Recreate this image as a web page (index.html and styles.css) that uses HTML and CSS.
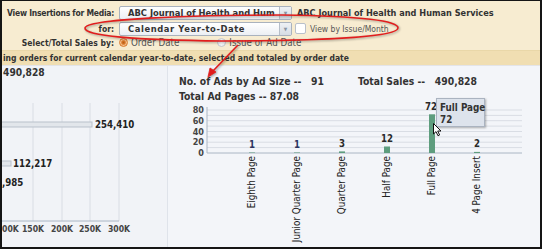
FILE: index.html
```html
<!DOCTYPE html>
<html lang="en">
<head>
  <meta charset="UTF-8" />
  <title>Insertions by Media</title>
  <link rel="stylesheet" href="styles.css">
</head>
<body>
  <div class="frame">
    <header class="filters">
      <div class="filter-row row-media">
        <span class="filter-label">View Insertions for Media:</span>
        <div class="select">
          <span class="select-text">ABC Journal of Health and Hum</span>
          <span class="select-btn">&#9660;</span>
        </div>
        <b class="media-name">ABC Journal of Health and Human Services</b>
      </div>
      <div class="filter-row row-period">
        <span class="filter-label">for:</span>
        <div class="select">
          <span class="select-text">Calendar Year-to-Date</span>
          <span class="select-btn">&#9660;</span>
        </div>
        <span class="checkbox"></span>
        <span class="option-text">View by Issue/Month</span>
      </div>
      <div class="filter-row row-total">
        <span class="filter-label">Select/Total Sales by:</span>
        <span class="radio radio-on"></span>
        <span class="option-text">Order Date</span>
        <span class="radio radio-off"></span>
        <span class="option-text">Issue or Ad Date</span>
      </div>
    </header>

    <div class="notice">ing orders for current calendar year-to-date, selected and totaled by order date</div>

    <main class="panels">
      <section class="left-panel">
        <div class="panel-total">490,828</div>
        <svg class="sales-chart" width="164" height="166" viewBox="2 80 164 166">
          <g class="grid-v">
            <line x1="33" y1="103" x2="33" y2="221" />
            <line x1="62" y1="103" x2="62" y2="221" />
            <line x1="90" y1="103" x2="90" y2="221" />
            <line x1="119" y1="103" x2="119" y2="221" />
          </g>
          <line class="axis" x1="0" y1="221" x2="119" y2="221" />
          <rect class="hbar" x="-2" y="122" width="94" height="5" />
          <rect class="hbar" x="-2" y="161" width="13" height="5" />
          <text class="bar-val" x="95" y="128">254,410</text>
          <text class="bar-val" x="13" y="167">112,217</text>
          <text class="bar-val" x="2" y="186">,985</text>
          <g class="axis-labels">
            <text class="axis-first" x="2" y="232">00K</text>
            <text x="33" y="232">150K</text>
            <text x="62" y="232">200K</text>
            <text x="90" y="232">250K</text>
            <text x="119" y="232">300K</text>
          </g>
        </svg>
      </section>

      <section class="right-panel">
        <div class="stats">
          <div class="stat-line">
            <span class="stat">No. of Ads by Ad Size --&nbsp;&nbsp; 91</span>
            <span class="stat stat-sales">Total Sales --&nbsp;&nbsp; 490,828</span>
          </div>
          <div class="stat-line">
            <span class="stat">Total Ad Pages -- 87.08</span>
          </div>
        </div>
        <svg class="size-chart" width="372" height="143" viewBox="166 103 372 143">
          <g class="grid-h">
            <line x1="205" y1="111" x2="520" y2="111" />
            <line x1="205" y1="116.4" x2="520" y2="116.4" />
            <line x1="205" y1="121.7" x2="520" y2="121.7" />
            <line x1="205" y1="127.1" x2="520" y2="127.1" />
            <line x1="205" y1="132.5" x2="520" y2="132.5" />
            <line x1="205" y1="137.9" x2="520" y2="137.9" />
            <line x1="205" y1="143.2" x2="520" y2="143.2" />
            <line x1="205" y1="148.6" x2="520" y2="148.6" />
          </g>
          <line class="axis" x1="205" y1="108" x2="205" y2="154" />
          <line class="axis" x1="205" y1="154" x2="520" y2="154" />
          <g class="y-labels">
            <text x="202" y="114">80</text>
            <text x="202" y="125">60</text>
            <text x="202" y="136">40</text>
            <text x="202" y="146">20</text>
            <text x="202" y="157">0</text>
          </g>
          <g class="vbars">
            <rect x="247" y="153.5" width="6" height="0.5" />
            <rect x="292" y="153.5" width="6" height="0.5" />
            <rect x="337" y="152.4" width="6" height="1.6" />
            <rect x="382" y="147.5" width="6" height="6.5" />
            <rect x="427" y="115.3" width="6" height="38.7" />
            <rect x="472" y="152.9" width="6" height="1.1" />
          </g>
          <g class="v-vals">
            <text class="v-val-low" x="250" y="149">1</text>
            <text class="v-val-low" x="295" y="149">1</text>
            <text x="340" y="148">3</text>
            <text x="385" y="143">12</text>
            <text x="429" y="111">72</text>
            <text x="475" y="148">2</text>
          </g>
          <g class="x-labels">
            <text transform="translate(253 157) rotate(-90)">Eighth Page</text>
            <text transform="translate(298 157) rotate(-90)">Junior Quarter Page</text>
            <text transform="translate(343 157) rotate(-90)">Quarter Page</text>
            <text transform="translate(388 157) rotate(-90)">Half Page</text>
            <text transform="translate(433 157) rotate(-90)">Full Page</text>
            <text transform="translate(478 157) rotate(-90)">4 Page Insert</text>
          </g>
        </svg>
        <div class="tooltip">
          <div>Full Page</div>
          <div>72</div>
        </div>
        <svg class="cursor" width="9" height="14" viewBox="0 0 9 14">
          <path d="M0.5 0.5 L0.5 11 L3 8.6 L5 12.8 L6.6 12 L4.7 8 L8 8 Z" />
        </svg>
      </section>
    </main>

    <!-- review markup drawn over the screen -->
    <svg class="annotation" width="542" height="249" viewBox="0 0 542 249">
      <path d="M85 28 C86 19 190 15 282 15 C362 16 399 21 398 28 C397 37 320 41 222 41 C135 40 84 36 85 28 Z" />
      <path d="M238 45 L212 72" />
      <path class="arrow-head" d="M208 77 L210 68 L216 72 Z" />
    </svg>
  </div>
</body>
</html>
```

FILE: styles.css
```css
* {
    margin: 0;
    padding: 0;
    box-sizing: border-box;
}
body {
    font-family: Tahoma, "DejaVu Sans Condensed", "DejaVu Sans", sans-serif;
    font-stretch: condensed;
    font-size: 8.5px;
    color: #333;
    background: #fff;
}
.frame {
    position: relative;
    width: 542px;
    height: 249px;
    border: 2px solid #151515;
    border-top-width: 1px;
    background: #f2f4f8;
    overflow: hidden;
    display: flex;
    flex-direction: column;
}

/* filter header */
.filters {
    background: #f7ecd1;
    padding-top: 4px;
    height: 49px;
}
.filter-row {
    display: flex;
    align-items: center;
    height: 15px;
}
.row-media {
    height: 16px;
}
.row-total {
    height: 13px;
}
.filter-label {
    display: flex;
    justify-content: flex-end;
    flex: none;
    width: 112px;
    white-space: nowrap;
    font-weight: bold;
    margin-right: 5px;
}
.row-media .filter-label {
    letter-spacing: -0.25px;
}
.select {
    display: flex;
    width: 173px;
    height: 14px;
    border: 1px solid #a9b2be;
    border-radius: 2px;
    background: linear-gradient(#ffffff, #eceff4);
}
.select-text {
    flex: 1;
    padding-left: 8px;
    line-height: 12px;
    font-size: 9.3px;
    font-weight: bold;
    color: #333;
    white-space: nowrap;
    overflow: hidden;
}
.row-period .select-text {
    letter-spacing: 0.6px;
}
.select-btn {
    width: 12px;
    border-left: 1px solid #b6bec9;
    background: linear-gradient(#eef1f5, #d6dce4);
    color: #8a94a3;
    font-size: 5px;
    line-height: 12px;
    text-align: center;
}
.media-name {
    margin-left: 5px;
    font-size: 9.1px;
    white-space: nowrap;
}
.checkbox {
    width: 11px;
    height: 11px;
    margin-left: 3px;
    border: 1px solid #b9c0ca;
    border-radius: 2px;
    background: #fff;
}
.option-text {
    margin-left: 4px;
    color: #555;
    white-space: nowrap;
}
.radio {
    width: 9px;
    height: 9px;
    border-radius: 50%;
}
.radio-on {
    background: radial-gradient(circle, #b85d17 0, #d97a2c 35%, #f5c393 60%, #e38a3e 100%);
    border: 1px solid #d97c31;
}
.radio-off {
    margin-left: 38px;
    background: radial-gradient(circle, #fff 0, #e6e8ec 100%);
    border: 1px solid #c4c8ce;
}
.row-total .option-text {
    margin-left: 3px;
    font-size: 9.7px;
}

.notice {
    height: 16px;
    line-height: 15px;
    padding-left: 1px;
    background: #f0deb2;
    border-top: 1px solid #e9d7a8;
    border-bottom: 1px solid #e3e4e8;
    font-weight: bold;
    white-space: nowrap;
}

/* panels */
.panels {
    flex: 1;
    display: flex;
}
.left-panel {
    width: 166px;
    border-right: 1px solid #dfe3ea;
    background: #f1f3f7;
}
.panel-total {
    height: 14px;
    line-height: 13px;
    padding-left: 1px;
    font-size: 10.2px;
    font-weight: bold;
}
.sales-chart,
.size-chart {
    display: block;
    font-family: Tahoma, "DejaVu Sans Condensed", "DejaVu Sans", sans-serif;
    font-stretch: condensed;
    font-size: 9.6px;
}
.grid-v line,
.grid-h line {
    stroke: #d9dde4;
    stroke-width: 1;
}
.axis {
    stroke: #aab6c4;
    stroke-width: 1;
}
.hbar {
    fill: #e2e6eb;
    stroke: #b9c1cb;
    stroke-width: 1;
}
.bar-val {
    font-weight: bold;
    fill: #222;
}
.axis-labels text {
    text-anchor: middle;
    font-size: 8.6px;
    font-weight: bold;
    fill: #444;
}
.axis-labels .axis-first {
    text-anchor: start;
}

.right-panel {
    position: relative;
    flex: 1;
    background: #f3f5f9;
}
.stats {
    padding: 8px 0 0 11px;
    height: 36px;
    font-size: 10.3px;
}
.stat-line {
    display: flex;
    height: 15px;
    line-height: 15px;
}
.stat {
    font-weight: bold;
    white-space: nowrap;
}
.stat-sales {
    margin-left: 34px;
}
.y-labels text {
    text-anchor: end;
    font-size: 9px;
    font-weight: bold;
    fill: #444;
}
.vbars rect {
    fill: #5e9d7e;
}
.v-vals text {
    text-anchor: middle;
    font-weight: bold;
    fill: #2a2a2a;
}
.v-vals .v-val-low {
    fill: #2c3560;
}
.x-labels text {
    text-anchor: end;
    font-size: 9.8px;
    fill: #222;
}
.tooltip {
    position: absolute;
    left: 268px;
    top: 32px;
    width: 49px;
    height: 29px;
    padding: 3px 0 0 3px;
    background: #dde3ec;
    border: 1px solid #aab3c0;
    box-shadow: 1px 1px 2px rgba(0, 0, 0, 0.3);
    font-size: 9.8px;
    font-weight: bold;
    line-height: 12px;
    white-space: nowrap;
    color: #333;
}
.cursor {
    position: absolute;
    left: 265px;
    top: 57px;
}
.cursor path {
    fill: #fff;
    stroke: #111;
    stroke-width: 1;
}
.annotation {
    position: absolute;
    left: -2px;
    top: -1px;
    pointer-events: none;
    filter: drop-shadow(1px 1px 1px rgba(0, 0, 0, 0.35));
}
.annotation path {
    fill: none;
    stroke: #e11d1d;
    stroke-width: 1.6;
}
.annotation .arrow-head {
    fill: #e11d1d;
    stroke-width: 0.8;
}
```
